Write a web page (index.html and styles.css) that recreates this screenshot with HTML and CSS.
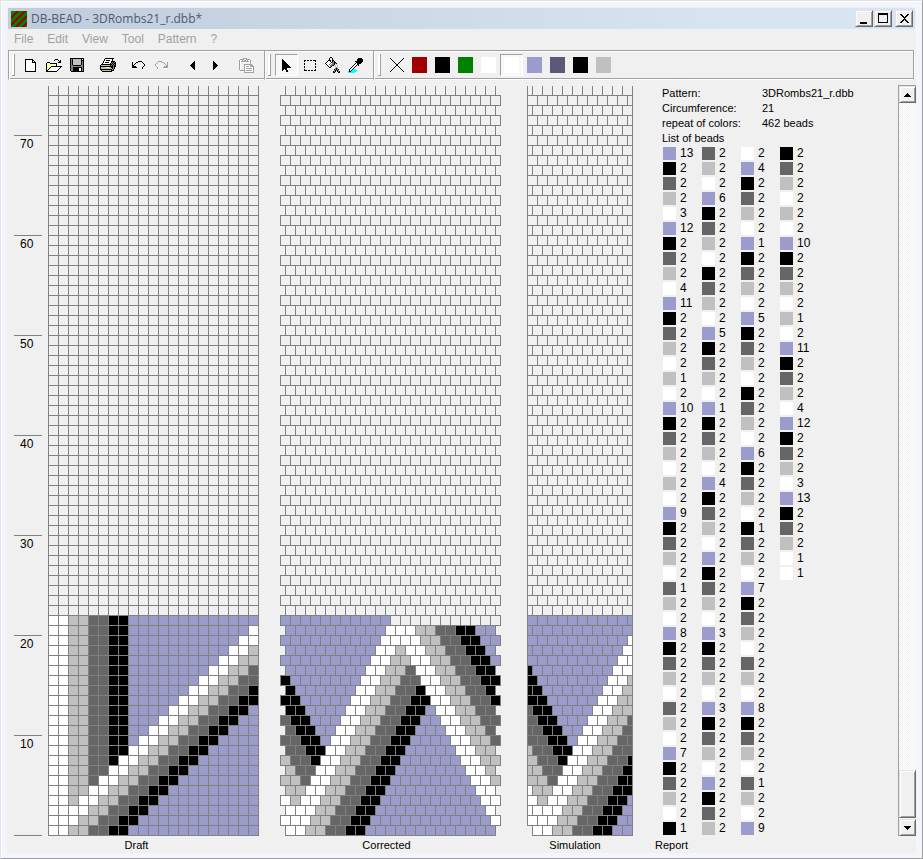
FILE: index.html
```html
<!DOCTYPE html>
<html lang="en">
<head>
<meta charset="utf-8">
<title>DB-BEAD - 3DRombs21_r.dbb*</title>
<link rel="stylesheet" href="styles.css">
</head>
<body>
<div class="window">
  <header class="titlebar">
    <svg class="app-icon" viewBox="0 0 16 16" aria-hidden="true">
      <rect width="16" height="16" fill="#008000"/>
      <path d="M-1 8 8-1M-1 15 15-1M4 17 17 4M11 17 17 11" stroke="#a00000" stroke-width="2"/>
    </svg>
    <h1 class="title">DB-BEAD - 3DRombs21_r.dbb*</h1>
    <div class="window-buttons">
      <button class="raised win-btn" aria-label="Minimize"><svg viewBox="0 0 12 11"><path d="M2 9h7v2H2z"/></svg></button>
      <button class="raised win-btn" aria-label="Maximize"><svg viewBox="0 0 12 11"><path d="M1 0h10v10H1zM2 2v7h8V2z" fill-rule="evenodd"/></svg></button>
      <button class="raised win-btn win-close" aria-label="Close"><svg viewBox="0 0 12 11"><path d="M2 1h2v1h1v1h1v1h1V3h1V2h1V1h2v1h-1v1H9v1H8v1H7v1h1v1h1v1h1v1h1v1H9V9H8V8H7V7H6v1H5v1H4v1H2V9h1V8h1V7h1V6h1V5H5V4H4V3H3V2H2z"/></svg></button>
    </div>
  </header>
  <nav class="menu">
    <button>File</button><button>Edit</button><button>View</button><button>Tool</button><button>Pattern</button><button>?</button>
  </nav>
  <div class="toolbars">
    <div class="toolbar" role="toolbar" aria-label="File tools">
      <span class="grip"></span>
      <button class="tool" aria-label="New" data-icon="new"></button>
      <button class="tool" aria-label="Open" data-icon="open"></button>
      <button class="tool" aria-label="Save" data-icon="save"></button>
      <span class="space"></span>
      <button class="tool" aria-label="Print" data-icon="print"></button>
      <span class="space"></span>
      <button class="tool" aria-label="Undo" data-icon="undo"></button>
      <button class="tool" aria-label="Redo" data-icon="redo"></button>
      <span class="space"></span>
      <button class="tool" aria-label="Rotate left" data-icon="prev"></button>
      <button class="tool" aria-label="Rotate right" data-icon="next"></button>
      <span class="space"></span>
      <button class="tool" aria-label="Paste" data-icon="paste"></button>
    </div>
    <div class="toolbar" role="toolbar" aria-label="Drawing tools">
      <span class="grip"></span>
      <button class="tool pressed" aria-label="Pointer" data-icon="pointer"></button>
      <button class="tool" aria-label="Select" data-icon="select"></button>
      <button class="tool" aria-label="Fill" data-icon="fill"></button>
      <button class="tool" aria-label="Pick color" data-icon="pick"></button>
    </div>
    <div class="toolbar toolbar-wide" role="toolbar" aria-label="Colors">
      <span class="grip"></span>
      <button class="tool" aria-label="No color"><svg width="14" height="14" viewBox="0 0 14 14"><path d="M0 0 14 14M14 0 0 14" stroke="#000"/></svg></button>
      <button class="tool" aria-label="Red"><span class="swatch red"></span></button>
      <button class="tool" aria-label="Black"><span class="swatch black"></span></button>
      <button class="tool" aria-label="Green"><span class="swatch green"></span></button>
      <button class="tool" aria-label="White"><span class="swatch white"></span></button>
      <button class="tool pressed" aria-label="White, selected"><span class="swatch white"></span></button>
      <button class="tool" aria-label="Lavender"><span class="swatch lavender"></span></button>
      <button class="tool" aria-label="Slate"><span class="swatch slate"></span></button>
      <button class="tool" aria-label="Black"><span class="swatch black"></span></button>
      <button class="tool" aria-label="Silver"><span class="swatch silver"></span></button>
    </div>
  </div>
  <main class="workspace">
    <section class="panel draft">
      <div class="view">
        <div class="ruler">
          <span class="tick">70</span><span class="tick">60</span><span class="tick">50</span><span class="tick">40</span><span class="tick">30</span><span class="tick">20</span><span class="tick">10</span>
        </div>
        <svg id="draft" class="beads"></svg>
      </div>
      <h2 class="caption">Draft</h2>
    </section>
    <section class="panel corrected">
      <div class="view"><svg id="corrected" class="beads"></svg></div>
      <h2 class="caption">Corrected</h2>
    </section>
    <section class="panel simulation">
      <div class="view"><svg id="simulation" class="beads"></svg></div>
      <h2 class="caption">Simulation</h2>
    </section>
    <section class="panel report">
      <div class="report-body">
        <dl class="facts">
          <dt>Pattern:</dt><dd>3DRombs21_r.dbb</dd>
          <dt>Circumference:</dt><dd>21</dd>
          <dt>repeat of colors:</dt><dd>462 beads</dd>
          <dt>List of beads</dt>
        </dl>
        <ol id="bead-list" class="bead-list"></ol>
      </div>
      <h2 class="caption">Report</h2>
    </section>
    <div class="scrollbar">
      <button class="raised scroll-btn" aria-label="Scroll up"><svg width="7" height="4" viewBox="0 0 7 4"><path d="M3 0h1v1h1v1h1v1h1v1H0V3h1V2h1V1h1z"/></svg></button>
      <div class="track"><div class="raised thumb"></div></div>
      <button class="raised scroll-btn" aria-label="Scroll down"><svg width="7" height="4" viewBox="0 0 7 4"><path d="M0 0h7v1H6v1H5v1H4v1H3V3H2V2H1V1H0z"/></svg></button>
    </div>
  </main>
</div>
<script src="app.js"></script>
</body>
</html>
```
FILE: styles.css
```css
* { box-sizing: border-box; }

body {
  margin: 0;
  font: 11px/15px "Liberation Sans", Arial, sans-serif;
  color: #000;
}

button {
  margin: 0;
  padding: 0;
  border: 0;
  background: none;
  font: inherit;
  color: inherit;
}

svg { display: block; shape-rendering: crispEdges; }

.window {
  display: flex;
  flex-direction: column;
  height: 100vh;
  padding: 6px 6px 5px;
  border: 1px solid;
  border-color: #e3e3e3 #a0a0a0 #a0a0a0 #e3e3e3;
  background: #f0f0f0;
  box-shadow: inset 1px 1px #fff, inset 0 -5px #f2f6fc, inset 6px 6px #f2f6fc, inset -6px 0 #f2f6fc;
}

/* Title bar */
.titlebar {
  display: flex;
  align-items: center;
  height: 21px;
  margin: 1px 1px 0;
  padding: 0 2px 0 3px;
  background: linear-gradient(90deg, #bfccdb, #d7e4f1 80%);
}
.app-icon { width: 16px; height: 16px; }
.title {
  flex: 1;
  margin: 0 0 0 4px;
  font: 12px/20px "Open Sans", "Noto Sans", sans-serif;
  color: #4c5a72;
}
.window-buttons { display: flex; gap: 1px; }
.raised {
  border: 1px solid;
  border-color: #e3e3e3 #696969 #696969 #e3e3e3;
  background: #f0f0f0;
  box-shadow: inset 1px 1px #fff, inset -1px -1px #a0a0a0;
}
.win-btn { width: 18px; height: 17px; padding: 1px 2px; }
.win-btn svg { width: 12px; height: 11px; }
.win-close { margin-left: 2px; }

/* Menu */
.menu {
  display: flex;
  gap: 14px;
  padding: 0 7px;
  font-size: 12px;
  line-height: 21px;
  color: #a0a0a0;
}

/* Toolbars */
.toolbars { display: flex; margin: 0 1px; border-right: 1px solid #fff; }
.toolbar {
  display: flex;
  align-items: center;
  height: 30px;
  padding: 0 6px 0 3px;
  border: solid #a0a0a0;
  border-width: 1px 1px 1px 0;
  border-bottom-color: #fff;
  box-shadow: inset 1px 1px #fff, inset 0 -1px #a0a0a0;
}
.toolbar:first-child { border-left-width: 1px; }
.toolbar-wide { flex: 1; padding-left: 4px; }
.grip {
  width: 3px;
  height: 22px;
  margin-right: 4px;
  border: solid #a0a0a0;
  border-width: 0 1px 1px 0;
  background: #fff;
}
.tool {
  display: flex;
  align-items: center;
  justify-content: center;
  width: 23px;
  height: 22px;
}
.space { width: 8px; }
.pressed, .track {
  background: repeating-conic-gradient(#fff 0 25%, #f0f0f0 0 50%) 0 0 / 2px 2px;
}
.pressed {
  border: 1px solid;
  border-color: #a0a0a0 #fff #fff #a0a0a0;
}
.swatch { width: 15px; height: 16px; }
.red { background: #a00000; }
.black { background: #000; }
.green { background: #008000; }
.white { background: #fff; }
.lavender { background: #9c9ccc; }
.slate { background: #5a5a78; }
.silver { background: #c0c0c0; }
.gray { background: #666; }

/* Workspace */
.workspace {
  display: flex;
  flex: 1;
  min-height: 0;
  padding: 5px 0 0 7px;
}
.panel { display: flex; flex-direction: column; }
.view {
  display: flex;
  flex: 1;
  align-items: flex-end;
  min-height: 0;
  margin-top: 1px;
  overflow: hidden;
}
.beads { flex: none; }
.caption {
  margin: 0;
  padding-top: 2px;
  font: inherit;
  text-align: center;
}
.ruler {
  display: flex;
  flex-direction: column;
  width: 28px;
  margin-right: 6px;
  border-bottom: 1px solid #808080;
  font-size: 12px;
}
.tick { height: 100px; padding: 1px 0 0 6px; border-top: 1px solid #808080; }
.corrected { margin-left: 13px; }
.corrected .view { padding-left: 8px; }
.simulation { margin-left: 16px; }
.simulation .view { padding-left: 10px; }

.report { flex: 1; margin-left: 22px; }
.report-body { flex: 1; min-height: 0; padding: 1px 0 0 7px; }
.report .caption { text-align: left; }
.facts {
  display: grid;
  grid-template-columns: 100px 1fr;
  margin: 0;
}
.facts dd { margin: 0; }
.bead-list {
  display: grid;
  grid-auto-flow: column;
  grid-template-rows: repeat(46, 15px);
  grid-auto-columns: 39px;
  margin: 0;
  padding: 0 0 0 1px;
  list-style: none;
}
.bead-list li { display: flex; align-items: center; gap: 4px; font-size: 12px; }
.bead-list .chip { width: 13px; height: 13px; }

/* Scroll bar */
.scrollbar {
  display: flex;
  flex-direction: column;
  width: 18px;
  margin-bottom: 17px;
  border: solid #a0a0a0;
  border-width: 1px 0 0 1px;
}
.scroll-btn {
  display: flex;
  align-items: center;
  justify-content: center;
  height: 17px;
}
.track {
  display: flex;
  flex: 1;
  flex-direction: column;
  justify-content: flex-end;
  padding-bottom: 1px;
}
.thumb { height: 48px; }
```
FILE: app.js
```js
const SVG = 'http://www.w3.org/2000/svg';
const CELL = 10;
const WIDTH = 21;
const ROWS = 75;
const FILLED = 22;
const COLORS = { P: '#9c9ccc', B: '#000', D: '#666', L: '#c0c0c0', W: '#fff' };

function rect(svg, x, y, w, h, fill, stroke) {
  const r = document.createElementNS(SVG, 'rect');
  r.setAttribute('x', x);
  r.setAttribute('y', y);
  r.setAttribute('width', w);
  r.setAttribute('height', h);
  r.setAttribute('fill', fill);
  if (stroke) r.setAttribute('stroke', stroke);
  svg.append(r);
}

/* The pattern, bottom row first: vertical stripes crossed by a diagonal band. */
const STRIPES = 'WWLLDDBB';
const beads = [];
for (let row = 0; row < FILLED; row++) {
  for (let col = 0; col < WIDTH; col++) {
    const offset = col - row;
    if (offset >= 0) beads.push(STRIPES[offset] || 'P');
    else beads.push(STRIPES[col] || 'P');
  }
}

function drawing(id, width) {
  const svg = document.getElementById(id);
  svg.setAttribute('width', width + 1);
  svg.setAttribute('height', ROWS * CELL + 1);
  return svg;
}

function cell(svg, x, row, width, index) {
  const y = (ROWS - 1 - row) * CELL;
  rect(svg, x + 0.5, y + 0.5, width, CELL, COLORS[beads[index]] || 'none', '#808080');
}

const draft = drawing('draft', WIDTH * CELL);
for (let row = 0; row < ROWS; row++) {
  for (let col = 0; col < WIDTH; col++) cell(draft, col * CELL, row, CELL, row * WIDTH + col);
}

/* Odd rows hold one bead more and start half a bead to the left. */
const corrected = drawing('corrected', 22 * CELL);
const simulation = drawing('simulation', 105);
let start = 0;
for (let row = 0; row < ROWS; row++) {
  const odd = row % 2;
  const count = WIDTH + odd;
  for (let i = 0; i < count; i++) cell(corrected, i * CELL + (odd ? 0 : 5), row, CELL, start + i);
  if (!odd && row > 0) cell(simulation, 0, row, 5, start - 1);
  for (let i = 0; i < 10; i++) cell(simulation, i * CELL + (odd ? 0 : 5), row, CELL, start + i);
  if (odd) cell(simulation, 100, row, 5, start + 10);
  start += count;
}

/* Bead list */
const LIST = `
P13 B2 D2 L2 W3 P12 B2 D2 L2 W4 P11 B2 D2 L2 W2 L1 W2 P10 B2 D2 L2 W2 L2 W2 P9 B2 D2 L2 W2 D1 L2 W2 P8 B2 D2 L2 W2 D2 L2 W2 P7 B2 D2 L2 W2 B1
D2 L2 W2 P6 B2 D2 L2 W2 B2 D2 L2 W2 P5 B2 D2 L2 W2 P1 B2 D2 L2 W2 P4 B2 D2 L2 W2 P2 B2 D2 L2 W2 P3 B2 D2 L2 W2 P3 B2 D2 L2 W2 P2 B2 D2 L2
W2 P4 B2 D2 L2 W2 P1 B2 D2 L2 W2 P5 B2 D2 L2 W2 B2 D2 L2 W2 P6 B2 D2 L2 W2 B1 D2 L2 W2 P7 B2 D2 L2 W2 D2 L2 W2 P8 B2 D2 L2 W2 D1 L2 W2 P9
B2 D2 L2 W2 L2 W2 P10 B2 D2 L2 W2 L1 W2 P11 B2 D2 L2 W4 P12 B2 D2 L2 W3 P13 B2 D2 L2 W1 W1`;
const NAMES = { P: 'lavender', B: 'black', D: 'gray', L: 'silver', W: 'white' };
const list = document.getElementById('bead-list');
for (const entry of LIST.trim().split(/\s+/)) {
  const item = document.createElement('li');
  const chip = document.createElement('span');
  chip.className = 'chip ' + NAMES[entry[0]];
  item.append(chip, entry.slice(1));
  list.append(item);
}

/* Toolbar icons as pixel maps */
const INK = { k: '#000', w: '#fff', g: '#808080', s: '#c0c0c0', y: '#ffff66', c: '#00ffff', h: '#a0a0a0' };
const ICONS = {
  new: `
kkkkkkkk...
kwwwwwwkk..
kwwwwwwkwk.
kwwwwwwkkkk
kwwwwwwwwwk
kwwwwwwwwwk
kwwwwwwwwwk
kwwwwwwwwwk
kwwwwwwwwwk
kwwwwwwwwwk
kwwwwwwwwwk
kwwwwwwwwwk
kkkkkkkkkkk`,
  open: `
.........kkk....
........k...k.k.
.............kk.
.kkk........kkk.
kywykkkkkkk.....
kwywywywywk.....
kywywywywyk.....
kwywykkkkkkkkkkk
kywykwwwwwwwwwk.
kwykwwwwwwwwwk..
kykwwwwwwwwwk...
kkwwwwwwwwwk....
kkkkkkkkkkk.....`,
  save: `
kkkkkkkkkkkkkk
kgksssssssskwk
kgksssssssskkk
kgksssssssskgk
kgksssssssskgk
kgksssssssskgk
kgksssssssskgk
kggkkkkkkkkggk
kggggggggggggk
kggkkkkkkkkkgk
kggkkkkkkwwkgk
kggkkkkkkwwkgk
kggkkkkkkwwkgk
.kkkkkkkkkkkkk`,
  print: `
.....kkkkkkkkk..
....kwwwwwwwk...
....kwkkkkwwk...
...kwwwwwwwkkkk.
...kwkkkkwwkgkgk
..kwwwwwwwkgkgkk
.kkkkkkkkkkkgkgk
kssssssssskgkgkk
kkkkkkkkkkkkkgkk
ksssssyyysskkgk.
kssssssssssskgk.
kkkkkkkkkkkksk..
.kssssssssskkk..
..kkkkkkkkkk....`,
  undo: `
......kkkk...
k...kk....k..
k..k.......k.
k.k.........k
kk..........k
kkkk.......k.
kkkkk.....k..
..........k..`,
  redo: `
...hhhh......
..h....hh...h
.h.......h..h
h.........h.h
hw.........hh
.hw......hhhh
..hw....hhhhh
..hw....wwwww`,
  prev: `
....k
...kk
..kkk
.kkkk
kkkkk
.kkkk
..kkk
...kk
....k`,
  next: `
k....
kk...
kkk..
kkkk.
kkkkk
kkkk.
kkk..
kk...
k....`,
  paste: `
....hhhh........
.hhhhwwhhhh.....
hwwh.hh.hwwh....
hwhhhhhhhhwh....
hw.wwwwwwwwhw...
hw.........hw...
hw...hhhhhhhh...
hw...hwwwwwhhh..
hw...hwhhhwhhhh.
hw...hwwwwwwwwh.
hw...hwhhhhhhwh.
hw...hwwwwwwwwh.
.hhhhhwhhhhhhwh.
..wwwhwwwwwwwwh.
.....hhhhhhhhhh.`,
  pointer: `
k........
kk.......
kkk......
kkkk.....
kkkkk....
kkkkkk...
kkkkkkk..
kkkkkkkk.
kkkkkkkkk
kkkkk....
kk.kk....
k...kk...
....kk...`,
  select: `
kk.kk.kk.kkk
k..........k
............
k..........k
k..........k
............
k..........k
k..........k
............
k..........k
kkk.kk.kk.kk`,
  fill: `
.....kk.........
....k..k........
....k..k........
...kkk.kk.......
..kwwk.kgk......
.kwwwwkggkk.....
kwwwwgwggkgk....
.kwwgwgggk.s....
..kwwggkk.sws...
...kwgk...sws...
....kk....sgs...
..........gkg...
.........kgkgk..
.........gkgkg..
........kgk.kgk.
........kk...kk.`,
  pick: `
..........kkkk.
.........kkkkkk
.........kkkkkk
.......kkkkkkkk
........kkkkkk.
.......kwkkkk..
......kwwkk....
.....kwwk.k....
....kwwk.......
...kwwk........
..kwwk.........
.kwwkccc.......
.kwkccccc......
ckkccccc.......
ccccccc........`
};
for (const button of document.querySelectorAll('[data-icon]')) {
  const lines = ICONS[button.dataset.icon].trim().split('\n');
  const svg = document.createElementNS(SVG, 'svg');
  svg.setAttribute('width', lines[0].length);
  svg.setAttribute('height', lines.length);
  lines.forEach((line, y) => {
    [...line].forEach((ink, x) => {
      if (INK[ink]) rect(svg, x, y, 1, 1, INK[ink]);
    });
  });
  button.append(svg);
}
```
